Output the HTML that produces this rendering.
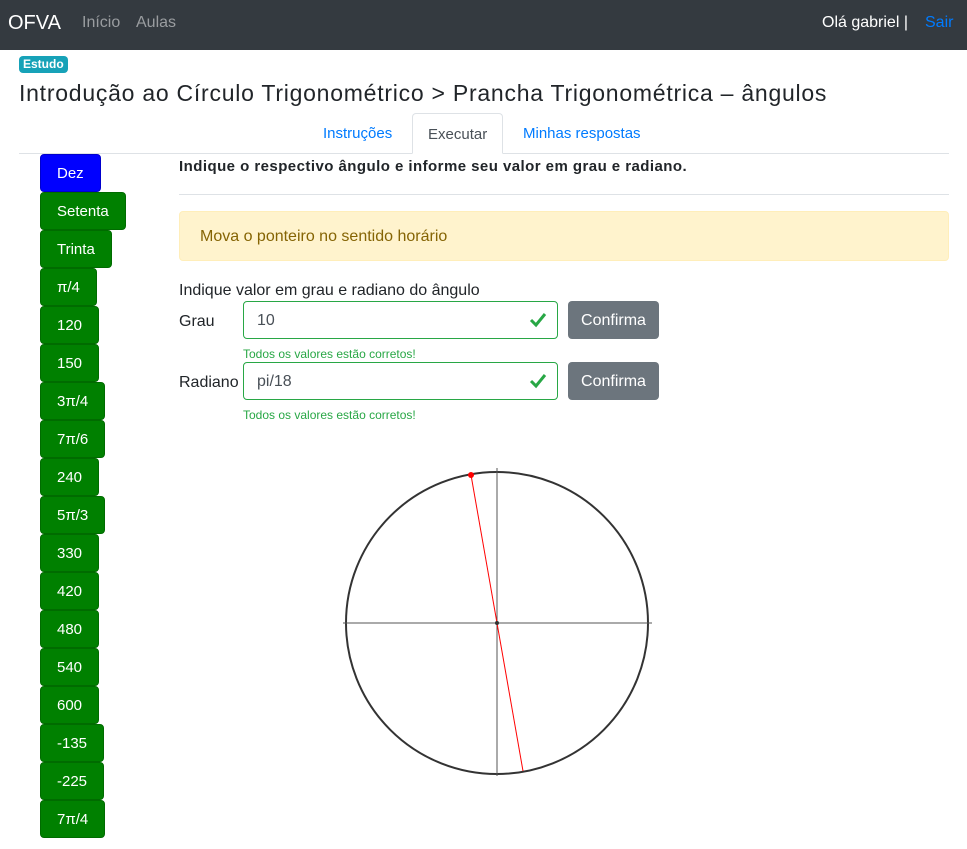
<!DOCTYPE html>
<html><head><meta charset="utf-8"><style>
*{box-sizing:border-box}
body{margin:0;width:967px;height:849px;overflow:hidden;font-family:"Liberation Sans","DejaVu Sans",sans-serif;color:#212529;background:#fff}
.nav{height:50px;background:#343a40;position:relative}
.nav span{position:absolute;top:14px;font-size:16px}
.brand{left:8px;color:#fff;font-size:20px!important;top:12px!important}
.badge{position:absolute;left:19px;top:56px;background:#17a2b8;color:#fff;font-size:12px;font-weight:bold;padding:2px 4px;border-radius:4px;line-height:13px}
h1{position:absolute;left:19px;top:79px;margin:0;font-size:23px;font-weight:500;line-height:28px;letter-spacing:0.75px}
.tabs{position:absolute;left:19px;top:113px;width:930px;height:41px;border-bottom:1px solid #dee2e6}
.tab{position:absolute;top:0;height:41px;line-height:41px;font-size:15px;color:#007bff;padding:0 15px}
.tab.act{border:1px solid #dee2e6;border-bottom-color:#fff;border-radius:4px 4px 0 0;color:#495057;background:#fff}
.btns{position:absolute;left:40px;top:154px}
.b{display:block;height:38px;margin-bottom:0;background:green;color:#fff;font-size:15px;line-height:38px;padding:0 16px;border-radius:4px;border:1px solid #006b00;width:max-content}
.b.blue{background:#00f;border-color:#00c}
.abs{position:absolute}
.inp{position:absolute;left:243px;width:315px;height:38px;border:1px solid #28a745;border-radius:4px;padding-left:13px;line-height:38px;font-size:16px;color:#495057}
.inp svg{position:absolute;right:10px;top:10px}
.cb{position:absolute;left:568px;width:91px;height:38px;background:#6c757d;color:#fff;border-radius:4px;font-size:16px;line-height:40px;text-align:center}
.ok{position:absolute;left:243px;font-size:12px;color:#28a745}
</style></head><body>
<div class="nav"><span class="brand">OFVA</span><span style="left:82px;color:#9a9da0">Início</span><span style="left:136px;color:#9a9da0">Aulas</span><span style="left:822px;color:#fff">Olá gabriel |</span><span style="left:925px;color:#007bff">Sair</span></div>
<div class="badge">Estudo</div>
<h1>Introdução ao Círculo Trigonométrico &gt; Prancha Trigonométrica – ângulos</h1>
<div class="tabs"><div class="tab" style="left:289px">Instruções</div><div class="tab act" style="left:393px">Executar</div><div class="tab" style="left:489px">Minhas respostas</div></div>
<div class="btns">
<div class="b blue">Dez</div><div class="b">Setenta</div><div class="b">Trinta</div><div class="b">π/4</div><div class="b">120</div><div class="b">150</div><div class="b">3π/4</div><div class="b">7π/6</div><div class="b">240</div><div class="b">5π/3</div><div class="b">330</div><div class="b">420</div><div class="b">480</div><div class="b">540</div><div class="b">600</div><div class="b">-135</div><div class="b">-225</div><div class="b">7π/4</div>
</div>
<div class="abs" style="left:179px;top:158px;font-weight:bold;font-size:15px;letter-spacing:0.45px">Indique o respectivo ângulo e informe seu valor em grau e radiano.</div>
<div class="abs" style="left:179px;top:194px;width:770px;border-top:1px solid #dee2e6"></div>
<div class="abs" style="left:179px;top:211px;width:770px;height:50px;background:#fff3cd;border:1px solid #ffeeba;border-radius:4px;color:#856404;font-size:16px;line-height:50px;padding-left:20px">Mova o ponteiro no sentido horário</div>
<div class="abs" style="left:179px;top:282px;font-size:16px">Indique valor em grau e radiano do ângulo</div>
<div class="abs" style="left:179px;top:313px;font-size:16px">Grau</div>
<div class="inp" style="top:301px">10<svg width="18" height="16" viewBox="0 0 18 16"><path d="M2 8l5 5 9-11" stroke="#28a745" stroke-width="3" fill="none"/></svg></div>
<div class="cb" style="top:301px">Confirma</div>
<div class="ok" style="top:347px">Todos os valores estão corretos!</div>
<div class="abs" style="left:179px;top:374px;font-size:16px">Radiano</div>
<div class="inp" style="top:362px">pi/18<svg width="18" height="16" viewBox="0 0 18 16"><path d="M2 8l5 5 9-11" stroke="#28a745" stroke-width="3" fill="none"/></svg></div>
<div class="cb" style="top:362px">Confirma</div>
<div class="ok" style="top:408px">Todos os valores estão corretos!</div>
<svg class="abs" style="left:0;top:0" width="967" height="849">
<circle cx="497" cy="623" r="151" fill="none" stroke="#333" stroke-width="2"/>
<line x1="343" y1="623" x2="652" y2="623" stroke="#555"/>
<line x1="497" y1="468" x2="497" y2="776" stroke="#555"/>
<line x1="471" y1="475" x2="523" y2="771" stroke="red"/>
<circle cx="471" cy="475" r="3" fill="red"/>
<circle cx="497" cy="623" r="2" fill="#333"/>
</svg>
</body></html>
